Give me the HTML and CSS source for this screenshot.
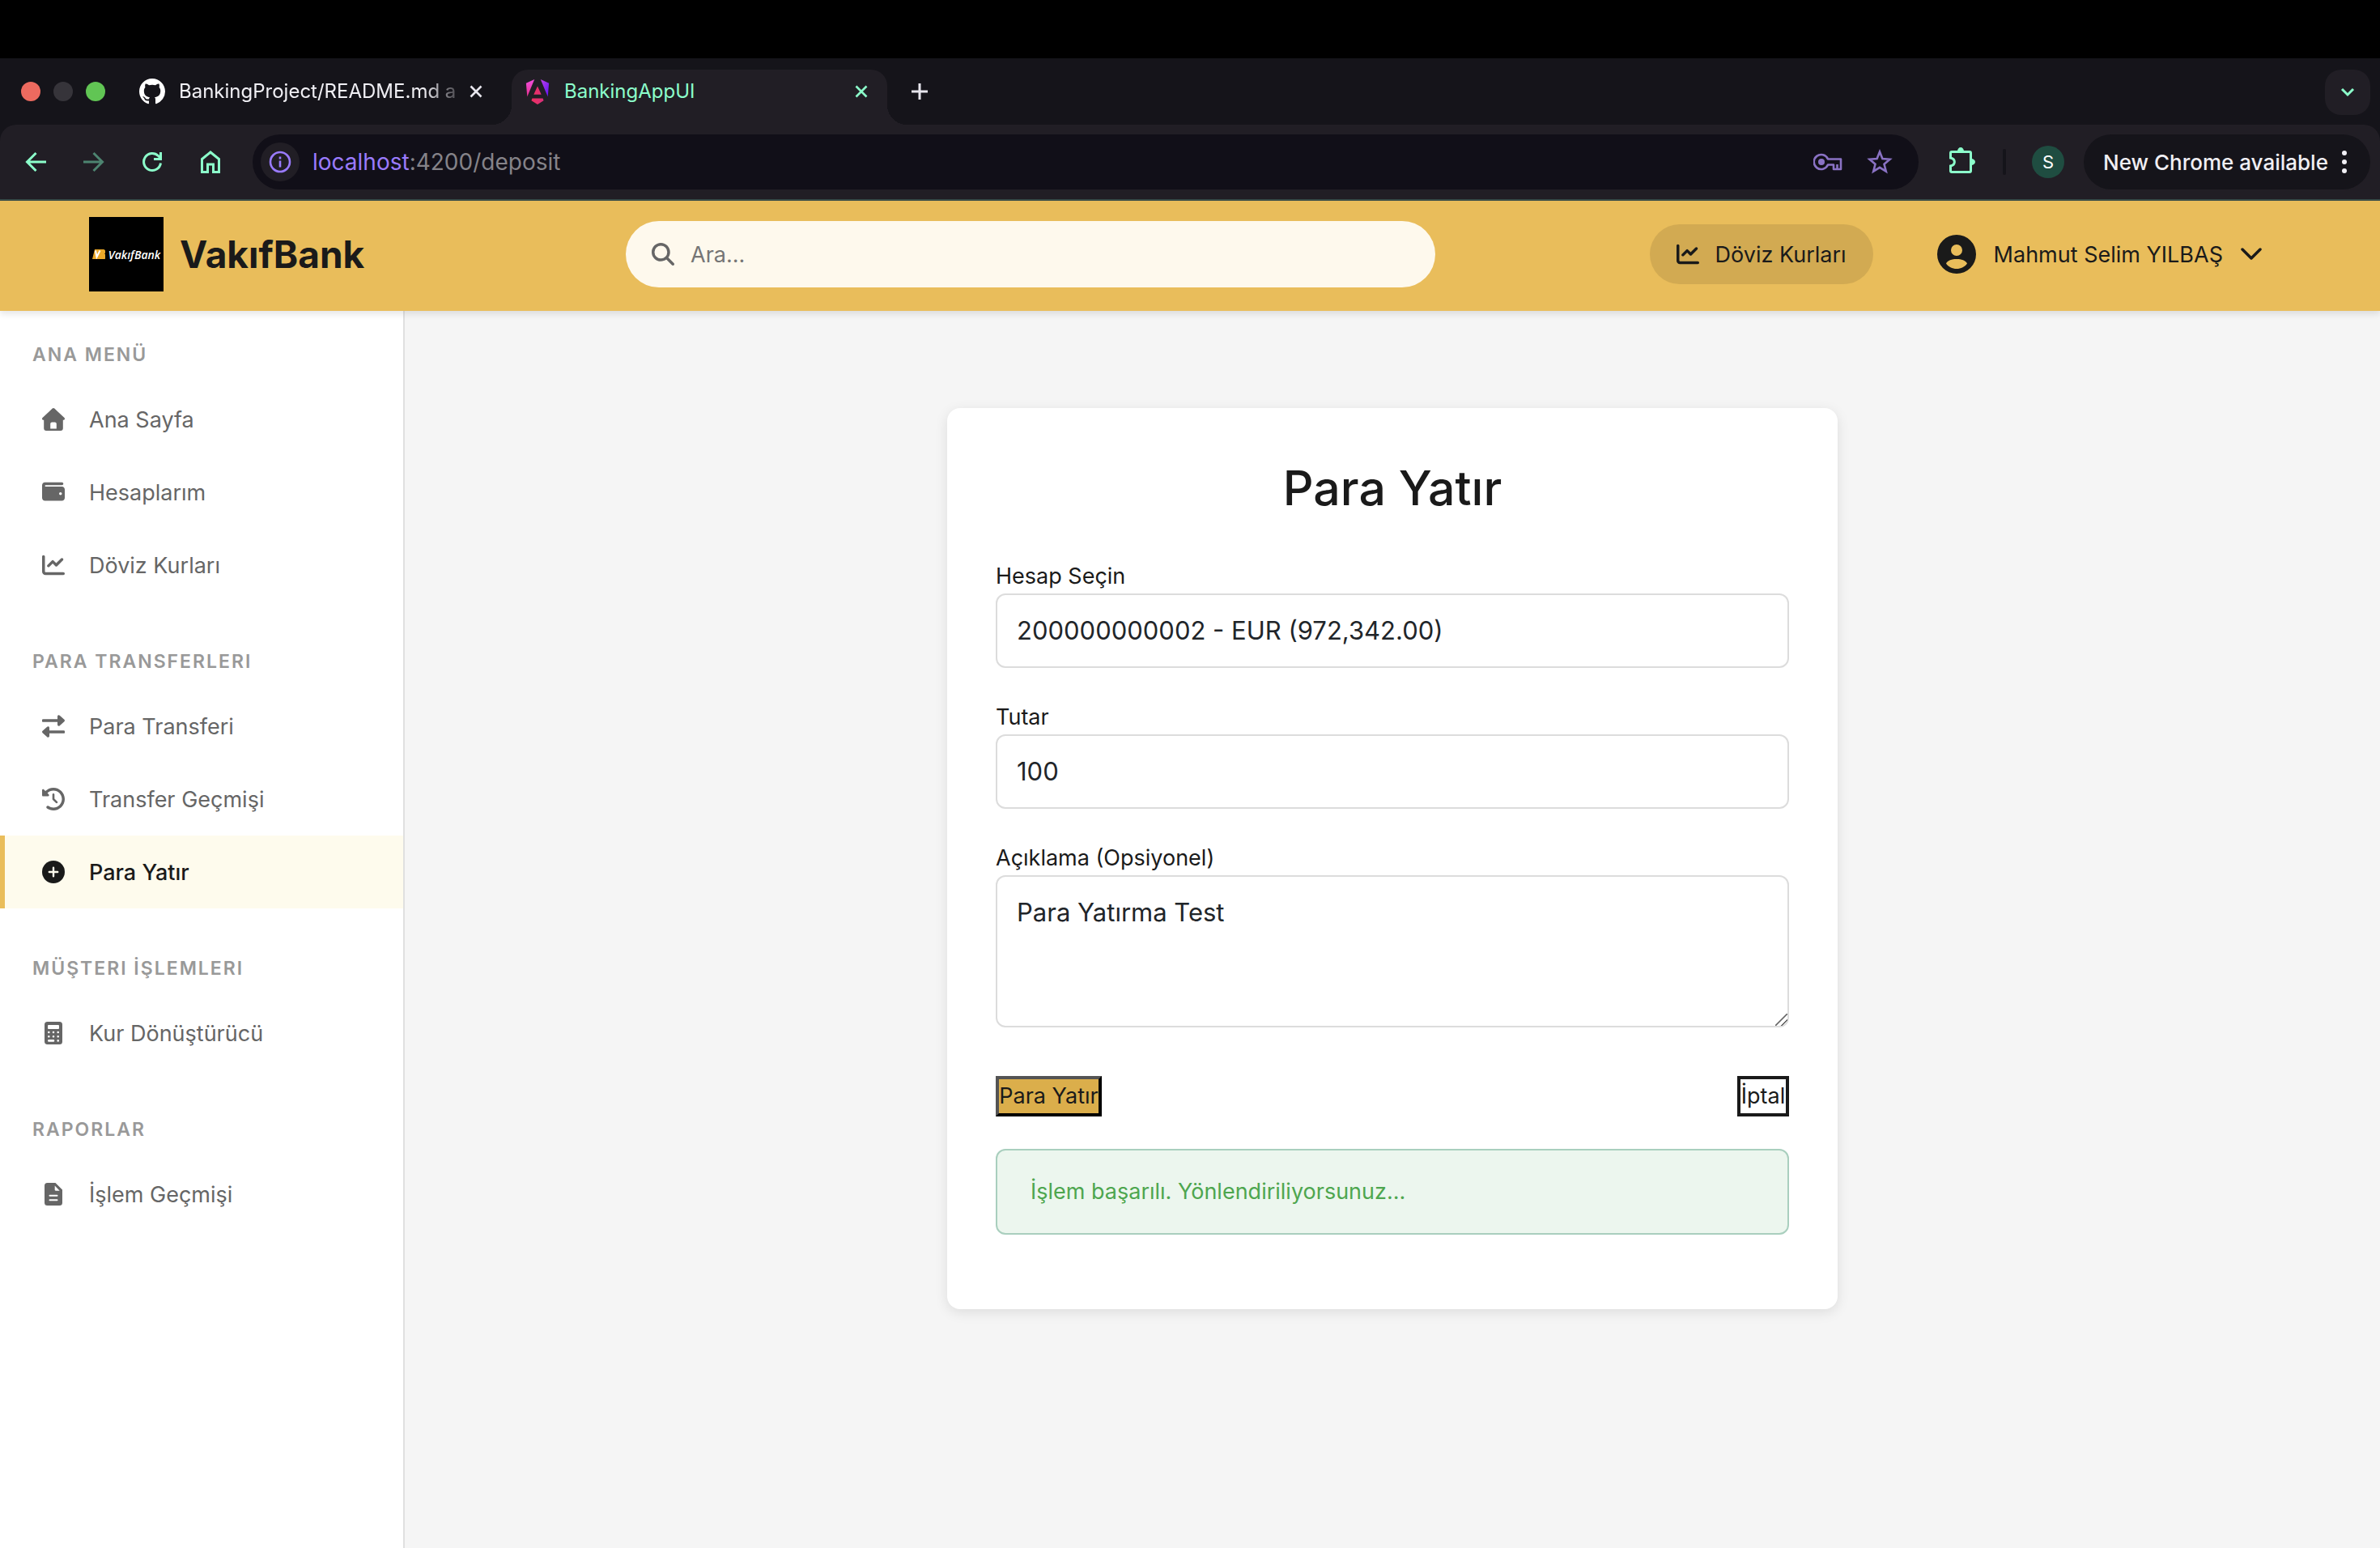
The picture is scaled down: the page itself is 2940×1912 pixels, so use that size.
FILE: index.html
```html
<!DOCTYPE html>
<html lang="tr">
<head>
<meta charset="utf-8">
<title>BankingAppUI</title>
<meta name="viewport" content="width=device-width, initial-scale=1">
<link rel="stylesheet" href="styles.css">
</head>
<body>
<svg class="sprite" aria-hidden="true">
  <symbol id="chart" viewBox="0 0 512 512"><path fill="currentColor" d="M64 64c0-17.700-14.300-32-32-32S0 46.300 0 64V400c0 44.200 35.800 80 80 80H480c17.700 0 32-14.300 32-32s-14.300-32-32-32H80c-8.800 0-16-7.200-16-16V64zm406.600 86.600c12.500-12.500 12.500-32.800 0-45.300s-32.800-12.500-45.300 0L320 210.700l-57.400-57.400c-12.500-12.500-32.800-12.500-45.300 0l-96 96c-12.500 12.500-12.500 32.800 0 45.300s32.800 12.500 45.300 0L240 221.300l57.400 57.400c12.500 12.500 32.800 12.500 45.300 0l128-128z"/></symbol>
  <symbol id="close" viewBox="0 0 16 16"><path d="M1.500 1.500l13 13M14.500 1.500l-13 13" stroke="currentColor" stroke-width="2.600" fill="none"/></symbol>
</svg>

<div class="browser">
  <div class="notch"></div>
  <div class="tabstrip">
    <div class="lights"><span class="light light-red"></span><span class="light light-idle"></span><span class="light light-green"></span></div>
    <div class="tab">
      <svg class="favicon" viewBox="0 0 16 16"><path fill="#fff" d="M8 0C3.580 0 0 3.580 0 8c0 3.540 2.290 6.530 5.470 7.590.4.070.55-.17.55-.38 0-.19-.01-.82-.01-1.490-2.010.37-2.530-.49-2.690-.94-.09-.23-.48-.94-.82-1.130-.28-.15-.68-.52-.01-.53.63-.01 1.080.58 1.230.82.72 1.210 1.870.87 2.330.66.070-.52.28-.87.51-1.070-1.780-.2-3.640-.89-3.640-3.950 0-.87.31-1.590.82-2.150-.08-.2-.36-1.020.08-2.120 0 0 .67-.21 2.200.82.64-.18 1.320-.27 2-.27s1.360.09 2 .27c1.530-1.040 2.200-.82 2.200-.82.44 1.100.16 1.920.08 2.120.51.56.82 1.270.82 2.150 0 3.070-1.870 3.750-3.650 3.950.29.25.54.73.54 1.480 0 1.070-.01 1.930-.01 2.200 0 .21.15.46.55.38A8.010 8.010 0 0016 8c0-4.420-3.580-8-8-8z"/></svg>
      <span class="tab-title tab-title-fade">BankingProject/README.md a</span>
      <button class="icon-btn tab-close" aria-label="Close tab"><svg width="16" height="16"><use href="#close"/></svg></button>
    </div>
    <div class="tab tab-active">
      <svg class="favicon" viewBox="0 0 32 34">
        <defs>
          <linearGradient id="ng1" x1="0" y1="0" x2="0" y2="1"><stop offset="0" stop-color="#f04fe0"/><stop offset="1" stop-color="#e8308c"/></linearGradient>
          <linearGradient id="ng2" x1="0" y1="0" x2="1" y2="1"><stop offset="0" stop-color="#c040e8"/><stop offset="1" stop-color="#5c12f5"/></linearGradient>
          <linearGradient id="ng3" x1="0" y1="0" x2="1" y2="0"><stop offset="0" stop-color="#f03060"/><stop offset="1" stop-color="#d8307c"/></linearGradient>
        </defs>
        <path fill="url(#ng1)" d="M12 1L1 6l1.500 18z"/><path fill="url(#ng2)" d="M20 1l11 5-1.500 18z"/>
        <path fill="url(#ng3)" d="M16 10l5 11H11zM9 26h14l1 3-8 5-8-5z"/>
      </svg>
      <span class="tab-title">BankingAppUI</span>
      <button class="icon-btn tab-close" aria-label="Close tab"><svg width="16" height="16"><use href="#close"/></svg></button>
    </div>
    <button class="icon-btn new-tab" aria-label="New tab"><svg width="20" height="20" viewBox="0 0 20 20"><path d="M10 0v20M0 10h20" stroke="currentColor" stroke-width="3"/></svg></button>
    <button class="icon-btn tab-search" aria-label="Search tabs"><svg width="18" height="12" viewBox="0 0 18 12"><path d="M2 2l7 7 7-7" stroke="currentColor" stroke-width="3" fill="none"/></svg></button>
  </div>

  <div class="toolbar">
    <div class="nav-buttons">
      <button class="icon-btn" aria-label="Back"><svg width="26" height="26" viewBox="0 0 26 26"><path d="M26 13H3M13.500 2L2.500 13l11 11" stroke="currentColor" stroke-width="3" fill="none"/></svg></button>
      <button class="icon-btn icon-dim" aria-label="Forward"><svg width="26" height="26" viewBox="0 0 26 26"><path d="M0 13h23M12.500 2l11 11-11 11" stroke="currentColor" stroke-width="3" fill="none"/></svg></button>
      <button class="icon-btn" aria-label="Reload"><svg width="26" height="26" viewBox="0 0 26 26"><path d="M23.500 14.500A10.500 10.500 0 1 1 20.500 5.500l3 3M23.500 1v8.500H15" stroke="currentColor" stroke-width="3" fill="none"/></svg></button>
      <button class="icon-btn" aria-label="Home"><svg width="26" height="30" viewBox="0 0 26 30"><path d="M2.500 27.500V11.500L13 3l10.500 8.500v16H16.500V18h-7v9.500z" stroke="currentColor" stroke-width="3" fill="none"/></svg></button>
    </div>
    <div class="address">
      <span class="site-info"><svg width="28" height="28" viewBox="0 0 28 28"><circle cx="14" cy="14" r="12" stroke="currentColor" stroke-width="2.600" fill="none"/><path d="M14 12.500v8M14 7.500v3" stroke="currentColor" stroke-width="2.600"/></svg></span>
      <span class="url"><span class="url-host">localhost</span>:4200/deposit</span>
      <svg class="addr-icon" width="36" height="22" viewBox="0 0 36 22"><path d="M18 7.500A9 9 0 1 0 18 14.500h7V20h9V7.500z" stroke="currentColor" stroke-width="2.600" stroke-linejoin="round" fill="none"/><circle cx="10" cy="11" r="4" fill="currentColor"/><path d="M29.500 14v5" stroke="currentColor" stroke-width="2.600"/></svg>
      <svg class="addr-icon" width="32" height="32" viewBox="0 0 32 32"><path d="M16 3.500l3.400 8.600 9.100.7-7 5.900 2.300 9L16 22.800l-7.800 4.900 2.300-9-7-5.900 9.100-.7z" stroke="currentColor" stroke-width="2.600" fill="none"/></svg>
    </div>
    <button class="icon-btn extensions" aria-label="Extensions"><svg width="34" height="38" viewBox="0 0 34 38"><path d="M4 6.500h22a1.500 1.500 0 0 1 1.500 1.500v22a1.500 1.500 0 0 1-1.500 1.500H4A1.500 1.500 0 0 1 2.500 30v-6c6.500-1.500 6.500-8.500 0-10V8A1.500 1.500 0 0 1 4 6.500z" stroke="currentColor" stroke-width="3" fill="none"/><path d="M11 6a4 5 0 0 1 8 0zM28 15a5 4 0 0 1 0 8z" fill="currentColor"/></svg></button>
    <span class="divider"></span>
    <span class="profile">S</span>
    <button class="update">New Chrome available<svg width="6" height="28" viewBox="0 0 6 28"><g fill="currentColor"><circle cx="3" cy="3" r="3"/><circle cx="3" cy="14" r="3"/><circle cx="3" cy="25" r="3"/></g></svg></button>
  </div>
</div>

<header class="header">
  <a class="brand" href="#">
    <span class="logo"><svg width="16" height="12" viewBox="0 0 16 12"><path fill="#eaa82a" d="M3 0h10a3 3 0 0 1 2 5.500A3 3 0 0 1 12 12H0z"/><path d="M4 1.500l1.500 8L9.500 1.500" stroke="#fff" stroke-width="2" fill="none"/></svg><span>VakıfBank</span></span>
    <span class="brand-name">VakıfBank</span>
  </a>
  <label class="search">
    <svg width="28" height="28" viewBox="0 0 512 512"><path fill="currentColor" d="M416 208c0 45.900-14.900 88.300-40 122.700L502.600 457.400c12.500 12.500 12.500 32.800 0 45.300s-32.800 12.500-45.300 0L330.700 376c-34.400 25.200-76.800 40-122.700 40C93.100 416 0 322.900 0 208S93.100 0 208 0S416 93.100 416 208zM208 352a144 144 0 1 0 0-288 144 144 0 1 0 0 288z"/></svg>
    <input type="text" placeholder="Ara..." aria-label="Ara">
  </label>
  <div class="actions">
    <a class="rates" href="#"><svg width="28" height="28"><use href="#chart"/></svg>Döviz Kurları</a>
    <button class="user">
      <svg width="48" height="48" viewBox="0 0 48 48"><path fill="currentColor" fill-rule="evenodd" d="M24 0a24 24 0 1 0 0 48a24 24 0 1 0 0-48zM24 12a7 7 0 1 1 0 14a7 7 0 1 1 0-14zM24 42c-5.500 0-10.200-2.500-13-6.500C13 31.500 18 30 24 30s11 1.500 13 5.500C34.200 39.500 29.500 42 24 42z"/></svg>
      Mahmut Selim YILBAŞ
      <svg width="26" height="16" viewBox="0 0 26 16"><path d="M2 2l11 11L24 2" stroke="currentColor" stroke-width="3.500" stroke-linecap="round" stroke-linejoin="round" fill="none"/></svg>
    </button>
  </div>
</header>

<div class="layout">
  <nav class="sidebar">
    <section class="menu-section">
      <h3 class="menu-title">ANA MENÜ</h3>
      <a class="menu-item" href="#"><span class="menu-icon"><svg width="28" height="28" viewBox="0 0 28 28"><path fill="currentColor" fill-rule="evenodd" d="M12.700.6a2 2 0 0 1 2.600 0l12.200 11.500c1 1 .4 2.700-1 2.700h-.7V25a3 3 0 0 1-3 3H5.200a3 3 0 0 1-3-3V14.800h-.7c-1.400 0-2-1.700-1-2.700zM12.200 17.500a2 2 0 0 0-2 2v6h7.600v-6a2 2 0 0 0-2-2z"/></svg></span>Ana Sayfa</a>
      <a class="menu-item" href="#"><span class="menu-icon"><svg width="28" height="28" viewBox="0 0 512 512"><path fill="currentColor" d="M64 32C28.700 32 0 60.700 0 96V384c0 35.300 28.700 64 64 64H448c35.300 0 64-28.700 64-64V192c0-35.300-28.700-64-64-64H80c-8.800 0-16-7.200-16-16s7.200-16 16-16H448c17.700 0 32-14.300 32-32s-14.300-32-32-32H64zM416 256a32 32 0 1 1 0 64 32 32 0 1 1 0-64z"/></svg></span>Hesaplarım</a>
      <a class="menu-item" href="#"><span class="menu-icon"><svg width="28" height="28"><use href="#chart"/></svg></span>Döviz Kurları</a>
    </section>
    <section class="menu-section">
      <h3 class="menu-title">PARA TRANSFERLERI</h3>
      <a class="menu-item" href="#"><span class="menu-icon"><svg width="28" height="28" viewBox="0 0 28 28"><path fill="currentColor" d="M1.500 5.200H19V2c0-1.700 1.700-2.200 2.800-1.200l5.600 5c.8.800.8 1.600 0 2.400l-5.600 5c-1.100 1-2.800.5-2.800-1.200V8.800H1.500a1.800 1.800 0 0 1 0-3.600zM26.500 19.200H9V16c0-1.700-1.700-2.200-2.800-1.200l-5.600 5c-.8.800-.8 1.600 0 2.400l5.600 5c1.100 1 2.800.5 2.800-1.200v-3.200h17.500a1.800 1.800 0 0 0 0-3.600z"/></svg></span>Para Transferi</a>
      <a class="menu-item" href="#"><span class="menu-icon"><svg width="28" height="28" viewBox="0 0 512 512"><path fill="currentColor" d="M75 75L41 41C25.900 25.900 0 36.600 0 57.900V168c0 13.300 10.700 24 24 24H134.100c21.400 0 32.100-25.900 17-41l-30.800-30.800C155 85.500 203 64 256 64c106 0 192 86 192 192s-86 192-192 192c-40.800 0-78.600-12.700-109.700-34.400c-14.500-10.100-34.400-6.600-44.600 7.900s-6.600 34.400 7.900 44.600C151.200 495 201.700 512 256 512c141.400 0 256-114.600 256-256S397.400 0 256 0C185.300 0 121.300 28.700 75 75zm181 53c-13.300 0-24 10.700-24 24V256c0 6.400 2.500 12.500 7 17l72 72c9.400 9.400 24.600 9.400 33.900 0s9.400-24.600 0-33.900l-65-65V152c0-13.300-10.700-24-24-24z"/></svg></span>Transfer Geçmişi</a>
      <a class="menu-item menu-item-active" href="#" aria-current="page"><span class="menu-icon"><svg width="28" height="28" viewBox="0 0 28 28"><circle cx="14" cy="14" r="14" fill="currentColor"/><path d="M14 8.800v10.400M8.800 14h10.400" stroke="#fefbed" stroke-width="2.400" stroke-linecap="round"/></svg></span>Para Yatır</a>
    </section>
    <section class="menu-section">
      <h3 class="menu-title">MÜŞTERI İŞLEMLERI</h3>
      <a class="menu-item" href="#"><span class="menu-icon"><svg width="22" height="28" viewBox="0 0 22 28"><path fill="currentColor" fill-rule="evenodd" d="M3.500 0h15A3.500 3.500 0 0 1 22 3.500v21a3.500 3.500 0 0 1-3.500 3.500h-15A3.500 3.500 0 0 1 0 24.500v-21A3.500 3.500 0 0 1 3.500 0zM5 4a1 1 0 0 0-1 1v3a1 1 0 0 0 1 1h12a1 1 0 0 0 1-1V5a1 1 0 0 0-1-1z"/><g stroke="#fff" stroke-width="2.600" stroke-linecap="round"><path d="M5.300 13h.01M11 13h.01M16.700 13h.01M5.300 18.200h.01M11 18.200h.01M16.700 18.200h.01M5.300 23.400H11M16.700 23.400h.01"/></g></svg></span>Kur Dönüştürücü</a>
    </section>
    <section class="menu-section">
      <h3 class="menu-title">RAPORLAR</h3>
      <a class="menu-item" href="#"><span class="menu-icon"><svg width="22" height="28" viewBox="0 0 22 28"><path fill="currentColor" d="M3.500 0h10L22 8.500v16a3.500 3.500 0 0 1-3.500 3.500h-15A3.500 3.500 0 0 1 0 24.500v-21A3.500 3.500 0 0 1 3.500 0z"/><path d="M12.700 3.500v5c0 .8.500 1.200 1.200 1.200h4.800z" fill="#fff"/><path d="M6.500 15.800h9M6.500 21.300h9" stroke="#fff" stroke-width="2" stroke-linecap="round"/></svg></span>İşlem Geçmişi</a>
    </section>
  </nav>

  <main class="main">
    <form class="card">
      <h2 class="card-title">Para Yatır</h2>
      <div class="field">
        <label for="account">Hesap Seçin</label>
        <select id="account" class="control"><option>200000000002 - EUR (972,342.00)</option></select>
      </div>
      <div class="field">
        <label for="amount">Tutar</label>
        <input id="amount" class="control" type="text" inputmode="decimal" value="100">
      </div>
      <div class="field">
        <label for="note">Açıklama (Opsiyonel)</label>
        <textarea id="note" class="control" rows="3">Para Yatırma Test</textarea>
      </div>
      <div class="buttons">
        <button type="submit" class="btn btn-primary">Para Yatır</button>
        <button type="button" class="btn btn-cancel">İptal</button>
      </div>
      <div class="alert" role="status">İşlem başarılı. Yönlendiriliyorsunuz...</div>
    </form>
  </main>
</div>
</body>
</html>
```
FILE: styles.css
```css
* { box-sizing: border-box; }

body {
  margin: 0;
  min-height: 100vh;
  display: flex;
  flex-direction: column;
  background: #f5f5f5;
  color: #1a1a1a;
  font-family: Inter, "Noto Sans", sans-serif;
  font-size: 27px;
}

a { color: inherit; text-decoration: none; }
button { font: inherit; cursor: pointer; }
svg { display: block; flex: none; }
.sprite { position: absolute; width: 0; height: 0; }

/* Browser window */
.browser { background: #15141a; color: #e8e6ee; font-size: 24px; }
.notch { height: 72px; background: #000; }

.tabstrip { display: flex; align-items: flex-end; height: 82px; padding-left: 26px; }
.lights { display: flex; gap: 16px; align-self: center; margin-right: 42px; }
.light { width: 24px; height: 24px; border-radius: 50%; }
.light-red { background: #ed6a5f; }
.light-idle { background: #36343a; }
.light-green { background: #61c554; }

.tab { display: flex; align-items: center; height: 68px; width: 460px; padding: 0 36px 14px 0; }
.favicon { width: 32px; height: 32px; margin-right: 17px; }
.tab-title { flex: 1; min-width: 0; line-height: 32px; white-space: nowrap; }
.tab-title-fade { color: #f0eff4; mask-image: linear-gradient(to right, #000 88%, transparent 104%); }
.tab-active {
  position: relative;
  width: 464px;
  padding: 0 24px 14px 16px;
  background: #211e25;
  color: #8cffcb;
  border-radius: 20px 20px 0 0;
}
.tab-active::before,
.tab-active::after {
  content: "";
  position: absolute;
  bottom: 0;
  width: 24px;
  height: 24px;
}
.tab-active::before { right: 100%; background: radial-gradient(circle at 0 0, transparent 24px, #211e25 24px); }
.tab-active::after { left: 100%; background: radial-gradient(circle at 100% 0, transparent 24px, #211e25 24px); }

.icon-btn { display: flex; align-items: center; justify-content: center; padding: 0; border: 0; background: none; color: #8cffcb; }
.tab-close { color: inherit; margin-left: 16px; }
.new-tab { align-self: center; margin-left: 30px; color: #e8e6ee; }
.tab-search { width: 56px; height: 56px; margin: 0 12px 12px auto; border-radius: 20px; background: #211e25; }

.toolbar {
  display: flex;
  align-items: center;
  height: 94px;
  padding: 0 12px 0 31px;
  background: #211e25;
  border-bottom: 2px solid #3a4d49;
  border-radius: 20px 20px 0 0;
}
.nav-buttons { display: flex; gap: 46px; align-items: center; margin-right: 39px; }
.icon-dim { color: #4d8470; }
.address {
  flex: 1;
  display: flex;
  align-items: center;
  height: 68px;
  padding: 0 32px 0 10px;
  border-radius: 34px;
  background: #110f18;
  font-size: 28px;
}
.site-info { display: flex; align-items: center; justify-content: center; width: 48px; height: 48px; border-radius: 50%; background: #211e25; color: #9a7bff; }
.url { flex: 1; margin-left: 16px; color: #858389; }
.url-host { color: #9a7bff; }
.addr-icon { color: #8a72c4; margin-left: 30px; }
.extensions { margin-left: 37px; }
.divider { width: 4px; height: 32px; margin: 0 32px 0 33px; border-radius: 2px; background: #15141a; }
.profile { display: flex; align-items: center; justify-content: center; width: 40px; height: 40px; border-radius: 50%; background: #1f4d41; color: #fff; font-size: 22px; }
.update {
  display: flex;
  align-items: center;
  justify-content: space-between;
  width: 354px;
  height: 68px;
  margin-left: 24px;
  padding: 0 29px 0 24px;
  border: 0;
  border-radius: 34px;
  background: #15141a;
  color: #f0eff4;
  font-size: 26px;
  font-weight: 500;
  white-space: nowrap;
}

/* App header */
.header {
  position: relative;
  display: flex;
  align-items: center;
  height: 136px;
  padding: 0 146px 4px 110px;
  background: #e9bd5b;
  box-shadow: 0 4px 8px rgba(0, 0, 0, .1);
}
.brand { display: flex; align-items: center; gap: 20px; flex: 0 0 663px; }
.logo { display: flex; align-items: center; justify-content: center; gap: 4px; width: 92px; height: 92px; background: #000; color: #fff; font: italic 600 14px "Open Sans", sans-serif; }
.brand-name { font-size: 46px; font-weight: 700; }
.search { display: flex; align-items: center; flex: 0 1 1000px; height: 82px; padding: 0 32px; gap: 20px; border-radius: 41px; background: #fef9ed; color: #666; }
.search input { flex: 1; min-width: 0; padding: 0; border: 0; outline: 0; background: none; font: inherit; color: #1a1a1a; }
.search input::placeholder { color: #757575; opacity: 1; }
.actions { display: flex; align-items: center; gap: 79px; margin-left: auto; }
.rates { display: flex; align-items: center; gap: 20px; height: 74px; padding: 0 33px; border-radius: 37px; background: #d2aa52; white-space: nowrap; }
.user { display: flex; align-items: center; gap: 22px; padding: 0; border: 0; background: none; color: #1a1a1a; white-space: nowrap; }

/* Sidebar */
.layout { display: flex; flex: 1; }
.sidebar { width: 500px; padding-top: 20px; background: #fff; border-right: 2px solid #e0e0e0; }
.menu-section { margin-bottom: 40px; }
.menu-title { margin: 0; padding: 20px 40px; font-size: 23px; line-height: 29px; font-weight: 600; letter-spacing: 2px; color: #999; }
.menu-item { display: flex; align-items: center; gap: 24px; height: 90px; padding-left: 40px; border-left: 6px solid transparent; color: #666; }
.menu-item-active { border-left-color: #e9bd5b; background: #fefbed; color: #1a1a1a; font-weight: 500; }
.menu-icon { display: flex; justify-content: center; width: 40px; }

/* Deposit form */
.main { flex: 1; padding: 120px 40px; }
.card { max-width: 1100px; margin: 0 auto; padding: 60px 60px 92px; border-radius: 16px; background: #fff; box-shadow: 0 4px 16px rgba(0, 0, 0, .1); }
.card-title { margin: 0 0 50px; font-size: 59px; line-height: 77px; font-weight: 500; text-align: center; }
.field { display: flex; flex-direction: column; margin-bottom: 40px; }
.field label { line-height: 42px; }
.control {
  width: 100%;
  padding: 20px 24px;
  border: 2px solid #dcdcdc;
  border-radius: 12px;
  background: #fff;
  color: #212529;
  font: inherit;
  font-size: 31px;
  line-height: 48px;
  appearance: none;
  outline: 0;
}
.control::-webkit-resizer {
  background: linear-gradient(135deg, transparent 46%, #666 47%, #666 53%, transparent 54%, transparent 72%, #666 73%, #666 79%, transparent 80%);
}
.buttons { display: flex; justify-content: space-between; margin: 60px 0 40px; }
.btn { height: 50px; padding: 0; border: 4px solid #1a1a1a; color: #1a1a1a; line-height: 42px; white-space: nowrap; }
.btn-primary { width: 131px; border-style: outset; border-color: #000; background: #dbae4b; }
.btn-cancel { width: 64px; background: #fff; }
.alert { padding: 31px 41px; border: 2px solid #a9cfbe; border-radius: 12px; background: #ecf6ee; color: #4ea64f; line-height: 40px; }
```
